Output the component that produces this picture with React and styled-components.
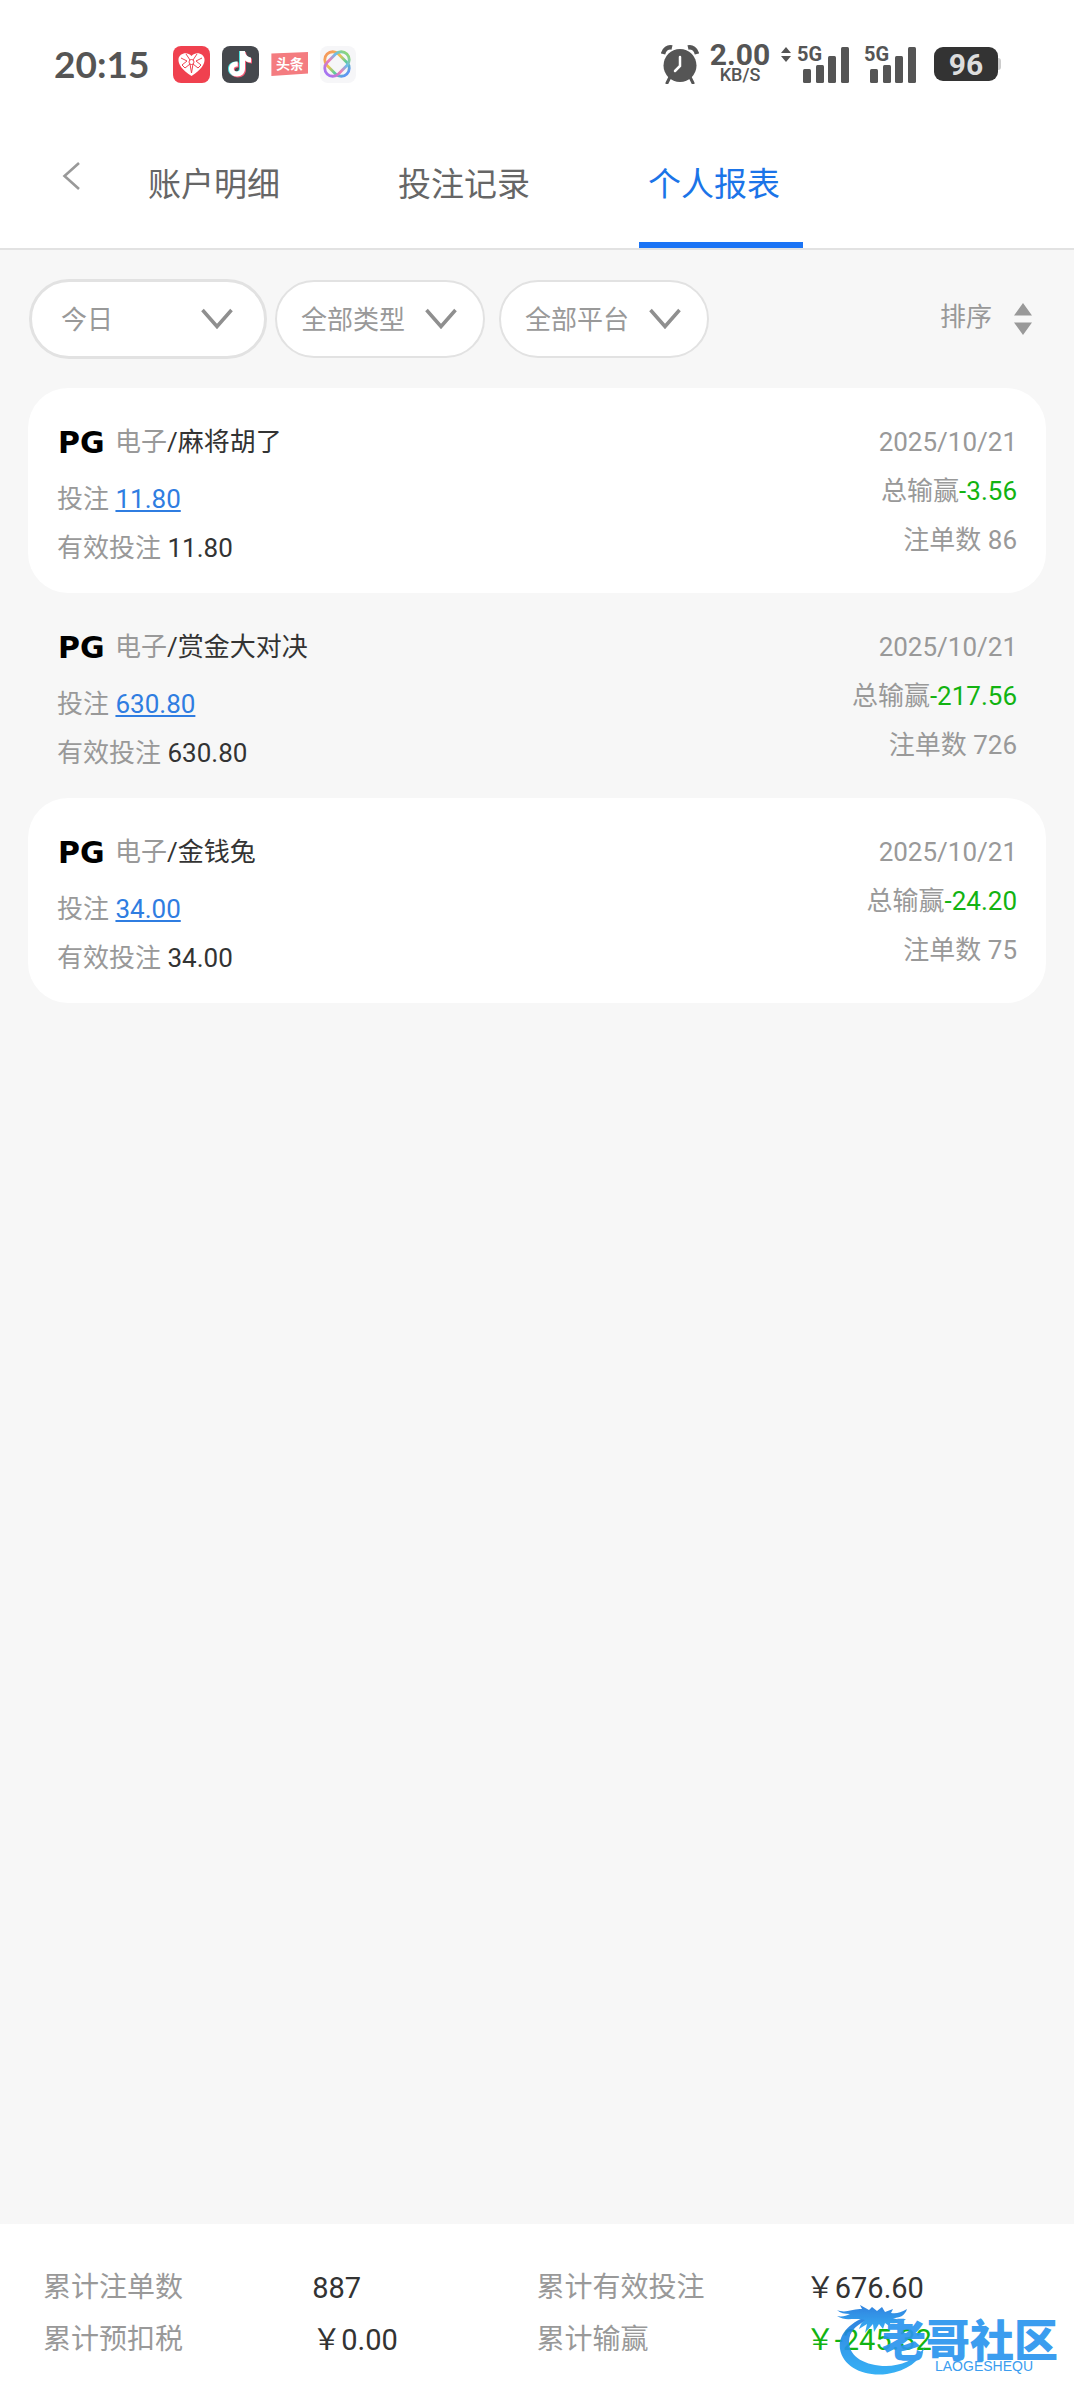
import React, { useState } from "react";
import styled, { createGlobalStyle } from "styled-components";

const GlobalStyle = createGlobalStyle`
  * { box-sizing: border-box; }
  body {
    margin: 0;
    background: #f7f7f7;
    color: #333;
    font-family: Roboto, "Noto Sans CJK SC", sans-serif;
    font-size: 26px;
  }
  button, select { font: inherit; color: inherit; margin: 0; }
  button { background: none; border: 0; padding: 0; cursor: pointer; }
`;

const Page = styled.div`
  display: flex;
  flex-direction: column;
  min-height: 100vh;
`;

/* Status bar */

const StatusBar = styled.div`
  display: flex;
  align-items: center;
  justify-content: space-between;
  height: 118px;
  padding: 10px 73px 0 54px;
  background: #fff;
  color: #555;
`;

const StatusGroup = styled.div`
  display: flex;
  align-items: ${(p) => p.$align || "center"};
  gap: ${(p) => p.$gap}px;
`;

const Clock = styled.time`
  margin-right: 12px;
  font: 700 37px/40px Lato, sans-serif;
`;

const Speed = styled.div`
  display: flex;
  flex-direction: column;
  align-items: center;
  width: 60px;
  font-weight: 700;
`;

const SpeedValue = styled.span`
  font-size: 30px;
  line-height: 22px;
`;

const SpeedUnit = styled.span`
  font-size: 18px;
  font-weight: 500;
  line-height: 18px;
`;

const Signal = styled.div`
  display: flex;
  align-items: flex-start;
  position: relative;
  font-size: 20px;
  font-weight: 700;
  line-height: 16px;
`;

const SignalLabel = styled.span`
  position: absolute;
  left: 0;
  top: 0;
`;

const Battery = styled.div`
  display: flex;
  align-items: center;
`;

const BatteryBody = styled.span`
  width: 64px;
  height: 34px;
  border-radius: 9px;
  background: #333;
  color: #ddd;
  text-align: center;
  font: 700 30px/35px Roboto, sans-serif;
`;

const BatteryTip = styled.span`
  width: 3px;
  height: 12px;
  border-radius: 0 3px 3px 0;
  background: #ccc;
`;

/* Header */

const Header = styled.header`
  display: flex;
  height: 132px;
  border-bottom: 2px solid #e2e2e2;
  background: #fff;
`;

const BackButton = styled.button`
  width: 139px;
  padding: 0 0 8px 62px;
  text-align: left;
`;

const Tabs = styled.nav`
  display: flex;
  gap: 86px;
`;

const Tab = styled.button`
  width: 164px;
  padding-left: 9px;
  padding-top: 4px;
  border-bottom: 6px solid ${(p) => (p.$active ? "#1b74f5" : "transparent")};
  color: ${(p) => (p.$active ? "#1b74e8" : "#666")};
  font-size: 33px;
  text-align: left;
  white-space: nowrap;
`;

/* Filters */

const Toolbar = styled.div`
  display: flex;
  align-items: center;
  justify-content: space-between;
  padding: 29px 42px 29px 29px;
  color: #999;
`;

const Filters = styled.div`
  display: flex;
  align-items: center;
  gap: ${(p) => p.$gap}px;
`;

const Pill = styled.label`
  position: relative;
  display: flex;
  width: ${(p) => (p.$wide ? 238 : 210)}px;
  height: ${(p) => (p.$wide ? 80 : 78)}px;
  border: ${(p) => (p.$wide ? 3 : 2)}px solid #e2e2e2;
  border-radius: 40px;
  background: #fff;
  overflow: hidden;

  svg {
    position: absolute;
    right: ${(p) => (p.$wide ? 31 : 26)}px;
    top: 50%;
    margin-top: -11px;
    pointer-events: none;
  }
`;

const Select = styled.select`
  flex: 1;
  appearance: none;
  border: 0;
  outline: 0;
  background: none;
  color: #999;
  padding: 2px 0 0 ${(p) => (p.$wide ? 29 : 24)}px;
  font-size: 26px;
`;

const SortButton = styled.button`
  display: flex;
  align-items: center;
  gap: 22px;
  line-height: 32px;
`;

const SortText = styled.span`
  padding-bottom: 5px;
`;

/* Report list */

const List = styled.main`
  flex: 1;
  padding: 0 28px;
`;

const Card = styled.article`
  display: flex;
  justify-content: space-between;
  height: 205px;
  padding: 30px 29px 0;
  border-radius: 40px;
  background: ${(p) => (p.$filled ? "#fff" : "transparent")};
  color: #999;
  line-height: 49px;
`;

const Column = styled.div`
  text-align: ${(p) => p.$align || "left"};
`;

const GameTitle = styled.div`
  display: flex;
  align-items: center;
  margin-bottom: 8px;
`;

const GameName = styled.span`
  color: #333;
`;

const Brand = styled.span`
  width: 58px;
  padding-left: 1px;
  color: #000;
  font-family: "DejaVu Sans", sans-serif;
  font-size: 30px;
  font-weight: 700;
`;

const BetLink = styled.a`
  color: #2f7de1;
  text-decoration: underline;
  text-decoration-thickness: 2px;
  text-underline-offset: 2px;
`;

const Amount = styled.span`
  color: ${(p) => (p.$loss ? "#12b312" : "#333")};
`;

/* Summary */

const Summary = styled.footer`
  position: relative;
  padding: 38px 0 34px 43px;
  background: #fff;
`;

const Totals = styled.dl`
  display: grid;
  grid-template-columns: 269fr 224fr 269fr 268fr;
  margin: 0;
  font-size: 28px;
  line-height: 52px;
`;

const TotalLabel = styled.dt`
  color: #999;
  white-space: nowrap;
`;

const TotalValue = styled.dd`
  margin: 0;
  color: ${(p) => (p.$loss ? "#12b312" : "#333")};
  font-size: 29px;
  white-space: nowrap;
`;

const Watermark = styled.div`
  position: absolute;
  right: 16px;
  bottom: 22px;
  width: 222px;
  height: 74px;
  color: #2b95ee;
  opacity: 0.92;
`;

const WatermarkText = styled.div`
  position: absolute;
  right: 0;
  top: 13px;
  display: flex;
  flex-direction: column;
  align-items: center;
`;

const WatermarkName = styled.span`
  font: 900 44px/42px "Noto Sans CJK SC", sans-serif;
`;

const WatermarkLatin = styled.span`
  padding-left: 28px;
  font: 400 14px/14px "Liberation Sans", sans-serif;
`;

const Alarm = () => (
  <svg width="38" height="39" viewBox="0 0 38 39" fill="none" aria-hidden="true">
    <path d="M9 32l-3 6M29 32l3 6" stroke="#555" strokeWidth="3" strokeLinecap="round" />
    <circle cx="19" cy="20.500" r="16.500" fill="#555" />
    <path d="M2 9C3 4 7 1.500 11 2.500M36 9C35 4 31 1.500 27 2.500" stroke="#555" strokeWidth="4.500" />
    <path d="M19 12v9l-5 5" stroke="#fff" strokeWidth="2.500" strokeLinecap="round" />
  </svg>
);

const HeartApp = () => (
  <svg width="37" height="37" viewBox="0 0 37 37" aria-hidden="true">
    <rect width="37" height="37" rx="8" fill="#f0414f" />
    <path d="M18.500 30C9 24 5 18 5.500 13c.6-6 9-8 13-3 4-5 12.400-3 13 3 .5 5-3.500 11-13 17z" fill="#fff" />
    <path d="M8 12l6 3-5 4M29 12l-6 3 5 4M13 8l4 6M24 8l-4 6M12 22l5-4 1.500 9M25 22l-5-4-1.500 9M9 19l3 3M28 19l-3 3" stroke="#f0414f" strokeWidth="1" fill="none" />
    <circle cx="18.500" cy="16" r="2.500" fill="none" stroke="#f0414f" />
  </svg>
);

const NOTE = "M20 6h5c.4 4 2.600 6 6 6.400v5c-2.400 0-4.400-.7-6-2v8c0 5-3.600 8-8 8s-8-3.200-8-7.500c0-4.600 3.800-7.700 8.700-7.300v5c-2-.4-3.900.5-3.900 2.400 0 1.500 1.300 2.500 3 2.500 1.900 0 3.200-1.200 3.200-3.300z";

const MusicApp = () => (
  <svg width="37" height="37" viewBox="0 0 37 37" aria-hidden="true">
    <rect width="37" height="37" rx="8" fill="#45484d" />
    <path d={NOTE} fill="#4fe3e0" transform="translate(-3 -1)" />
    <path d={NOTE} fill="#f45b77" transform="translate(-1 0)" />
    <path d={NOTE} fill="#fff" transform="translate(-2 -1)" />
  </svg>
);

const NewsBadge = styled.span`
  width: 37px;
  height: 24px;
  background: #f47c80;
  color: #fff;
  text-align: center;
  font: 700 14px/23px "Noto Sans CJK SC", sans-serif;
  clip-path: polygon(0 6%, 100% 0, 100% 90%, 0 100%);
`;

const KnotApp = () => (
  <svg width="36" height="37" viewBox="0 0 36 37" fill="none" aria-hidden="true">
    <defs>
      <linearGradient id="knot" x1="0" y1="0" x2="1" y2="0">
        <stop offset="0" stopColor="#f59a5c" />
        <stop offset=".35" stopColor="#f2c14e" />
        <stop offset=".65" stopColor="#5fcf97" />
        <stop offset="1" stopColor="#5f95f5" />
      </linearGradient>
      <linearGradient id="knotB" x1="0" y1="0" x2="1" y2="0">
        <stop offset="0" stopColor="#a474f2" />
        <stop offset=".4" stopColor="#f07bb0" />
        <stop offset=".7" stopColor="#6bbcf0" />
        <stop offset="1" stopColor="#8bd67a" />
      </linearGradient>
    </defs>
    <rect width="36" height="37" rx="8" fill="#f6f6f8" />
    <rect x="3" y="10" width="28" height="16" rx="8" transform="rotate(45 17 18)" stroke="url(#knot)" strokeWidth="2.800" />
    <rect x="3" y="10" width="28" height="16" rx="8" transform="rotate(-45 17 18)" stroke="url(#knotB)" strokeWidth="2.800" />
  </svg>
);

const TrafficArrows = () => (
  <svg width="10" height="16" viewBox="0 0 10 16" fill="#555" aria-hidden="true">
    <path d="M5 1l5 6H0zM5 16l5-6H0z" />
  </svg>
);

const Bars = () => (
  <svg width="52" height="37" viewBox="0 0 52 37" fill="#555" aria-hidden="true">
    <rect x="6" y="23" width="8" height="14" rx="1.500" />
    <rect x="19" y="19" width="8" height="18" rx="1.500" />
    <rect x="31" y="10" width="8" height="27" rx="1.500" />
    <rect x="44" y="1" width="8" height="36" rx="1.500" />
  </svg>
);

const ChevronDown = () => (
  <svg width="32" height="22" viewBox="0 0 32 22" fill="none" aria-hidden="true">
    <path d="M1.500 2L16 18.500 30.500 2" stroke="#8f8f8f" strokeWidth="3.500" />
  </svg>
);

const ChevronLeft = () => (
  <svg width="19" height="28" viewBox="0 0 19 28" fill="none" aria-hidden="true">
    <path d="M17 1L2.500 14 17 27" stroke="#999" strokeWidth="2.600" />
  </svg>
);

const SortArrows = () => (
  <svg width="18" height="32" viewBox="0 0 18 32" fill="#999" aria-hidden="true">
    <path d="M9 0l9 12.500H0zM9 32l9-12.500H0z" />
  </svg>
);

const Dragon = () => (
  <svg width="96" height="74" viewBox="0 0 96 74" aria-hidden="true">
    <defs>
      <linearGradient id="dragon" x1="0" y1="0" x2="0" y2="1">
        <stop offset="0" stopColor="#1f78dc" />
        <stop offset="1" stopColor="#27abf5" />
      </linearGradient>
    </defs>
    <g fill="url(#dragon)">
      <path d="M35 11C12 18 2 32 4 45c3 18 24 28 47 25 20-3 33-13 38-27-10 13-24 19-39 19-20 0-37-9-37-24 0-11 8-19 24-24z" />
      <path d="M1 6c10 4 15-2 25-1l-2-4 9 5 3-3 5 4 5-4 3 5 8-3-2 4c5 1 9 0 16-4-2 7-8 9-14 9 4 2 8 1 13 1-4 4-11 5-16 4l2 5-7-5-2 6-4-5-5 8-1-8-8 9 2-9-8 5c2-5 2-6 6-9-12-3-19 2-28-4 5 1 9 0 13-2-5 0-10-1-13-4z" />
    </g>
  </svg>
);

const FILTERS = [
  { label: "类型", value: "全部类型" },
  { label: "平台", value: "全部平台" },
];

const REPORTS = [
  { game: "麻将胡了", bet: "11.80", profit: "-3.56", count: 86 },
  { game: "赏金大对决", bet: "630.80", profit: "-217.56", count: 726 },
  { game: "金钱兔", bet: "34.00", profit: "-24.20", count: 75 },
];

const TABS = ["账户明细", "投注记录", "个人报表"];

function FilterPill({ label, value, wide }) {
  return (
    <Pill $wide={wide}>
      <Select $wide={wide} aria-label={label} defaultValue={value}>
        <option>{value}</option>
      </Select>
      <ChevronDown />
    </Pill>
  );
}

function ReportCard({ report, filled }) {
  return (
    <Card $filled={filled}>
      <Column>
        <GameTitle>
          <Brand>PG</Brand>
          <span>电子</span>
          <GameName>/{report.game}</GameName>
        </GameTitle>
        <div>
          投注 <BetLink href="#bets">{report.bet}</BetLink>
        </div>
        <div>
          有效投注 <Amount>{report.bet}</Amount>
        </div>
      </Column>
      <Column $align="right">
        <div>2025/10/21</div>
        <div>
          总输赢<Amount $loss>{report.profit}</Amount>
        </div>
        <div>注单数 {report.count}</div>
      </Column>
    </Card>
  );
}

function Network() {
  return (
    <Signal>
      <SignalLabel>5G</SignalLabel>
      <Bars />
    </Signal>
  );
}

export default function App() {
  const [active, setActive] = useState(2);
  return (
    <Page>
      <GlobalStyle />
      <StatusBar>
        <StatusGroup $gap={12}>
          <Clock>20:15</Clock>
          <HeartApp />
          <MusicApp />
          <NewsBadge>头条</NewsBadge>
          <KnotApp />
        </StatusGroup>
        <StatusGroup $gap={11}>
          <Alarm />
          <Speed>
            <SpeedValue>2.00</SpeedValue>
            <SpeedUnit>KB/S</SpeedUnit>
          </Speed>
          <StatusGroup $gap={18}>
            <StatusGroup $gap={6} $align="flex-start">
              <TrafficArrows />
              <StatusGroup $gap={15}>
                <Network />
                <Network />
              </StatusGroup>
            </StatusGroup>
            <Battery>
              <BatteryBody>96</BatteryBody>
              <BatteryTip />
            </Battery>
          </StatusGroup>
        </StatusGroup>
      </StatusBar>

      <Header>
        <BackButton type="button" aria-label="返回">
          <ChevronLeft />
        </BackButton>
        <Tabs>
          {TABS.map((tab, i) => (
            <Tab key={tab} type="button" $active={i === active} onClick={() => setActive(i)}>
              {tab}
            </Tab>
          ))}
        </Tabs>
      </Header>

      <Toolbar>
        <Filters $gap={8}>
          <FilterPill wide label="日期" value="今日" />
          <Filters $gap={14}>
            {FILTERS.map((f) => (
              <FilterPill key={f.label} {...f} />
            ))}
          </Filters>
        </Filters>
        <SortButton type="button">
          <SortText>排序</SortText>
          <SortArrows />
        </SortButton>
      </Toolbar>

      <List>
        {REPORTS.map((r, i) => (
          <ReportCard key={r.game} report={r} filled={i % 2 === 0} />
        ))}
      </List>

      <Summary>
        <Totals>
          <TotalLabel>累计注单数</TotalLabel>
          <TotalValue>887</TotalValue>
          <TotalLabel>累计有效投注</TotalLabel>
          <TotalValue>￥676.60</TotalValue>
          <TotalLabel>累计预扣税</TotalLabel>
          <TotalValue>￥0.00</TotalValue>
          <TotalLabel>累计输赢</TotalLabel>
          <TotalValue $loss>￥-245.32</TotalValue>
        </Totals>
        <Watermark>
          <Dragon />
          <WatermarkText>
            <WatermarkName>老哥社区</WatermarkName>
            <WatermarkLatin>LAOGESHEQU</WatermarkLatin>
          </WatermarkText>
        </Watermark>
      </Summary>
    </Page>
  );
}
